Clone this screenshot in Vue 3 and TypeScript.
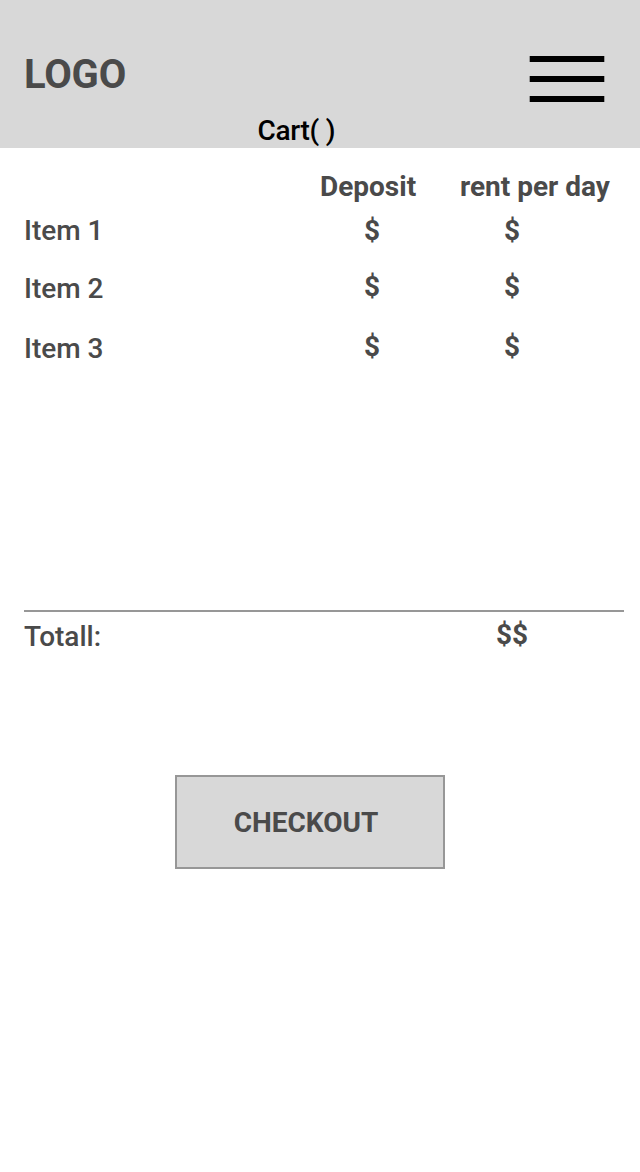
<script setup lang="ts">
interface CartItem {
  name: string
  deposit: string
  rent: string
}

const items: CartItem[] = [
  { name: 'Item 1', deposit: '$', rent: '$' },
  { name: 'Item 2', deposit: '$', rent: '$' },
  { name: 'Item 3', deposit: '$', rent: '$' },
]
</script>

<template>
  <main class="page">
    <header class="header">
      <div class="bar">
        <span class="logo">LOGO</span>
        <svg class="menu" width="76" height="46" viewBox="0 0 76 46" role="img" aria-label="Menu">
          <path d="M.7 3H75.3M.7 23H75.3M.7 43H75.3" stroke="#000" stroke-width="6" />
        </svg>
      </div>
      <h1 class="title">Cart( )</h1>
    </header>
    <section class="cart">
      <div class="row heads">
        <span></span>
        <span class="head">Deposit</span>
        <span class="head">rent per day</span>
      </div>
      <div v-for="item in items" :key="item.name" class="row item">
        <span class="name">{{ item.name }}</span>
        <span class="price">{{ item.deposit }}</span>
        <span class="price">{{ item.rent }}</span>
      </div>
    </section>
    <div class="total">
      <span class="name">Totall:</span>
      <span class="sum">$$</span>
    </div>
    <button class="checkout" type="button">CHECKOUT</button>
  </main>
</template>

<style>
body {
  margin: 0;
  background: #fff;
}
</style>

<style scoped>
.page {
  box-sizing: border-box;
  width: 640px;
  height: 1172px;
  font-family: Roboto, sans-serif;
  font-size: 28px;
  line-height: 32px;
  color: #4a4a4a;
  display: flex;
  flex-direction: column;
}
.header {
  box-sizing: border-box;
  height: 148px;
  padding-top: 51px;
  background: #d8d8d8;
}
.bar {
  display: flex;
  justify-content: space-between;
  height: 64px;
  padding: 0 35px 0 24px;
}
.logo {
  font-size: 40px;
  line-height: 48px;
  font-weight: 700;
  letter-spacing: -0.2px;
}
.menu {
  margin-top: 5px;
}
.title {
  margin: 0 0 0 257.5px;
  font-size: 28px;
  line-height: 32px;
  font-weight: 500;
  letter-spacing: -0.3px;
  color: #000;
}
.cart {
  height: 462px;
  box-sizing: border-box;
  padding: 23px 0 0 24px;
}
.row {
  display: grid;
  grid-template-columns: 296px 140px 1fr;
  white-space: nowrap;
}
.heads {
  height: 44px;
}
.head,
.price,
.sum {
  font-weight: 700;
}
.name {
  font-weight: 500;
}
.item {
  height: 58px;
}
.item:nth-child(3) {
  height: 60px;
}
.price {
  padding-left: 44px;
}
.item + .item .price {
  margin-top: -2px;
}
.total {
  display: flex;
  margin: 0 16px 0 24px;
  height: 165px;
  box-sizing: border-box;
  border-top: 2px solid #979797;
  padding-top: 9px;
}
.total .name {
  width: 472px;
}
.sum {
  margin-top: -2px;
}
.checkout {
  box-sizing: border-box;
  width: 270px;
  height: 94px;
  margin-left: 175px;
  padding: 2px 8px 0 0;
  border: 2px solid #979797;
  background: #d8d8d8;
  color: #4a4a4a;
  font: 700 28px/32px Roboto, sans-serif;
}
</style>
